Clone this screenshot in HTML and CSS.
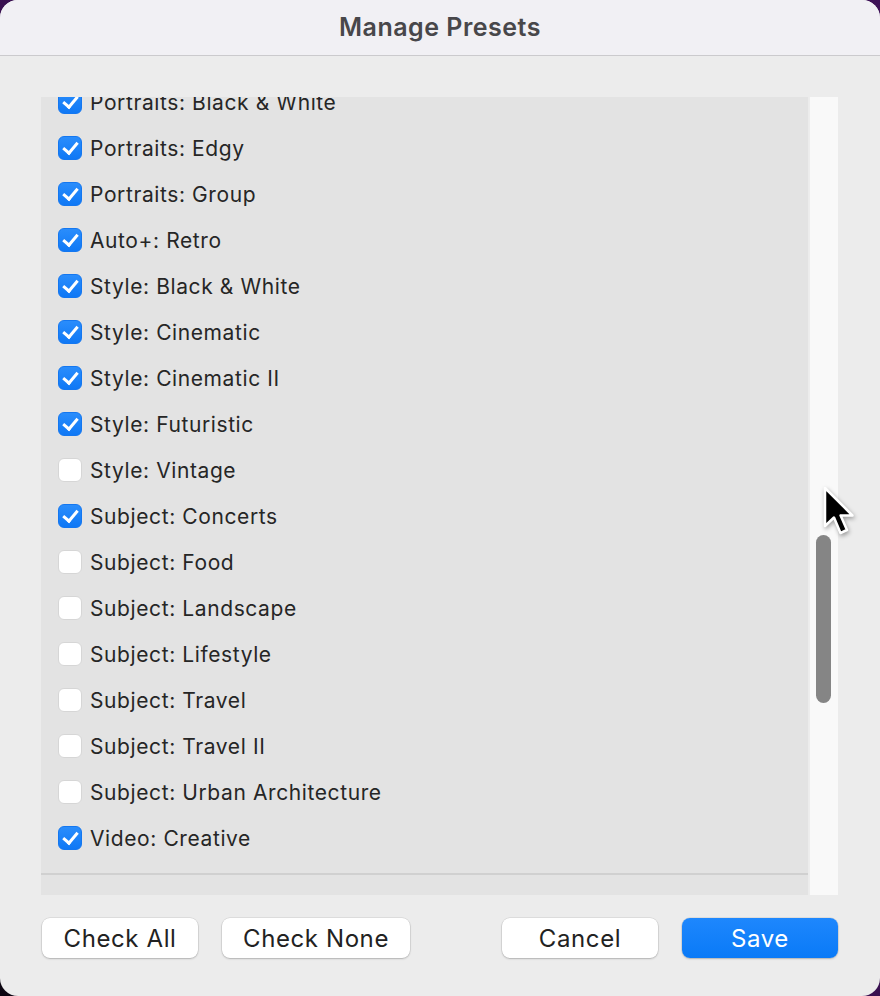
FILE: index.html
```html
<!DOCTYPE html>
<html lang="en">
<head>
  <meta charset="UTF-8" />
  <meta name="viewport" content="width=device-width, initial-scale=1" />
  <title>Manage Presets</title>
  <link rel="stylesheet" href="styles.css">
</head>
<body>
  <div class="dialog">
    <div class="titlebar">Manage Presets</div>

    <div class="body">
      <div class="list-box">
        <div class="list">
          <div class="rows">
            <label class="row"><span class="box on"></span>Portraits: Black &amp; White</label>
            <label class="row"><span class="box on"></span>Portraits: Edgy</label>
            <label class="row"><span class="box on"></span>Portraits: Group</label>
            <label class="row"><span class="box on"></span>Auto+: Retro</label>
            <label class="row"><span class="box on"></span>Style: Black &amp; White</label>
            <label class="row"><span class="box on"></span>Style: Cinematic</label>
            <label class="row"><span class="box on"></span>Style: Cinematic II</label>
            <label class="row"><span class="box on"></span>Style: Futuristic</label>
            <label class="row"><span class="box"></span>Style: Vintage</label>
            <label class="row"><span class="box on"></span>Subject: Concerts</label>
            <label class="row"><span class="box"></span>Subject: Food</label>
            <label class="row"><span class="box"></span>Subject: Landscape</label>
            <label class="row"><span class="box"></span>Subject: Lifestyle</label>
            <label class="row"><span class="box"></span>Subject: Travel</label>
            <label class="row"><span class="box"></span>Subject: Travel II</label>
            <label class="row"><span class="box"></span>Subject: Urban Architecture</label>
            <label class="row"><span class="box on"></span>Video: Creative</label>
          </div>
          <div class="list-end"></div>
        </div>
        <div class="scrollbar"><div class="thumb"></div></div>
      </div>

      <div class="actions">
        <div class="left">
          <button class="btn">Check All</button>
          <button class="btn">Check None</button>
        </div>
        <div class="right">
          <button class="btn">Cancel</button>
          <button class="btn primary">Save</button>
        </div>
      </div>
    </div>
  </div>

  <!-- mouse pointer over the scrollbar -->
  <svg class="cursor" width="34" height="54" viewBox="0 0 34 54">
    <path d="M3 2 L3 40 L12 31.5 L18.5 47 L25 44 L18.6 29.5 L30.5 29.5 Z" fill="#000" stroke="#fff" stroke-width="2.5" stroke-linejoin="round"/>
  </svg>
</body>
</html>
```

FILE: styles.css
```css
html, body {
  margin: 0;
  height: 100%;
}
body {
  font-family: Inter, "Liberation Sans", Arial, sans-serif;
  background: linear-gradient(to top right, #0b0510 0%, #2b0c3c 20%, #3e1257 60%, #3e1257 100%);
  overflow: hidden;
}
.dialog {
  height: 996px;
  border-radius: 18px;
  background: #ececec;
  overflow: hidden;
  display: flex;
  flex-direction: column;
}
.titlebar {
  height: 56px;
  box-sizing: border-box;
  border-bottom: 1px solid #cbcacd;
  background: #f1f0f4;
  color: #48474a;
  font-size: 25px;
  font-weight: 600;
  letter-spacing: 0.5px;
  text-align: center;
  line-height: 54px;
}
.body {
  flex: 1;
  padding: 41px 42px 0 41px;
}
.list-box {
  display: flex;
  height: 798px;
}
.list {
  flex: 1;
  background: #e3e3e3;
  overflow: hidden;
}
.rows {
  margin-top: -18px;
  padding-bottom: 12px;
  border-bottom: 2px solid #d0d0d0;
}
.row {
  display: flex;
  align-items: center;
  height: 46px;
  padding-left: 17px;
  font-size: 21px;
  letter-spacing: 0.6px;
  color: #262626;
}
.box {
  width: 24px;
  height: 24px;
  box-sizing: border-box;
  border-radius: 6px;
  background: #fff;
  border: 1px solid #d6d6d6;
  margin-right: 8px;
  position: relative;
}
.box.on {
  background: linear-gradient(#2a8dfc, #0f78f5);
  border-color: #1477f0;
}
.box.on::after {
  content: "";
  position: absolute;
  left: 7px;
  top: 2px;
  width: 6px;
  height: 12px;
  border: solid #fff;
  border-width: 0 3px 3px 0;
  transform: rotate(40deg);
}
.scrollbar {
  width: 29px;
  margin-left: 1px;
  background: #f9f9f9;
  border-left: 1px solid #ededed;
  box-sizing: border-box;
  position: relative;
}
.thumb {
  position: absolute;
  left: 6px;
  top: 438px;
  width: 15px;
  height: 168px;
  border-radius: 8px;
  background: #858585;
}
.actions {
  display: flex;
  justify-content: space-between;
  margin-top: 23px;
  padding-left: 1px;
}
.left, .right {
  display: flex;
  gap: 24px;
}
.btn {
  font-family: Inter, "Liberation Sans", Arial, sans-serif;
  height: 40px;
  min-width: 156px;
  padding: 0 21px;
  border: none;
  border-radius: 8px;
  background: #fff;
  color: #222;
  font-size: 24px;
  letter-spacing: 0.6px;
  box-shadow: 0 0 0 0.5px rgba(0,0,0,0.12), 0 1px 2px rgba(0,0,0,0.2);
}
.btn.primary {
  background: linear-gradient(#1e87fd, #0a7af7);
  color: #fff;
}
.cursor {
  position: absolute;
  left: 822px;
  top: 486px;
  filter: drop-shadow(1px 2px 2px rgba(0,0,0,0.35));
}
```
